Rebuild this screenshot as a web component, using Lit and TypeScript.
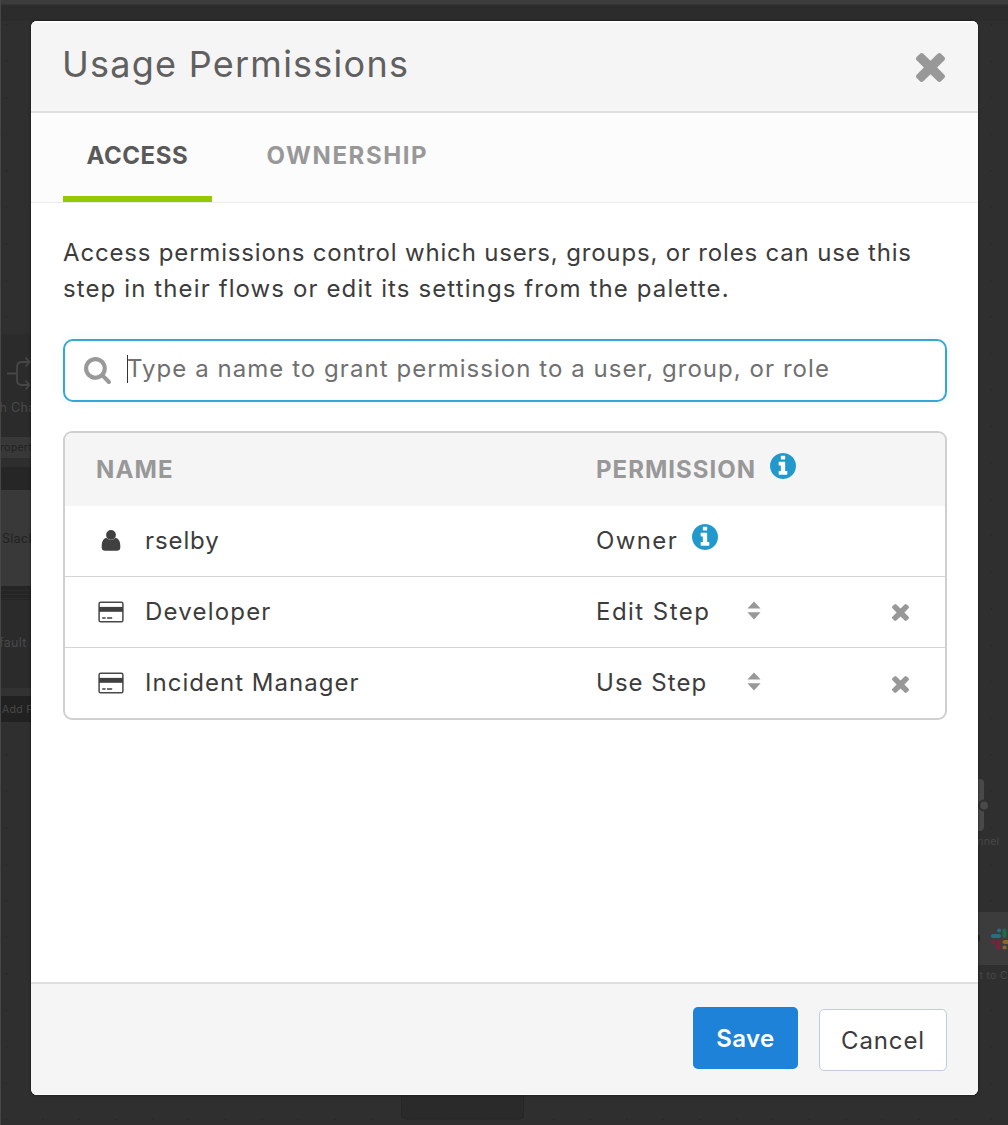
import { LitElement, html, css, svg, nothing } from "lit";
import { customElement, state } from "lit/decorators.js";

const TIMES = svg`<path d="M1490 1322q0 40-28 68l-136 136q-28 28-68 28t-68-28l-294-294-294 294q-28 28-68 28t-68-28l-136-136q-28-28-28-68t28-68l294-294-294-294q-28-28-28-68t28-68l136-136q28-28 68-28t68 28l294 294 294-294q28-28 68-28t68 28l136 136q28 28 28 68t-28 68l-294 294 294 294q28 28 28 68z"/>`;
const SEARCH = svg`<path d="M1216 832q0-185-131.5-316.5t-316.5-131.5-316.5 131.5-131.5 316.5 131.5 316.5 316.5 131.5 316.5-131.5 131.5-316.5zm512 832q0 52-38 90t-90 38q-54 0-90-38l-343-342q-179 124-399 124-143 0-273.5-55.5t-225-150-150-225-55.5-273.5 55.5-273.5 150-225 225-150 273.5-55.5 273.5 55.5 225 150 150 225 55.5 273.5q0 220-124 399l343 343q37 37 37 90z"/>`;
const INFO = svg`<path d="M1152 1376v-160q0-14-9-23t-23-9h-96v-512q0-14-9-23t-23-9h-320q-14 0-23 9t-9 23v160q0 14 9 23t23 9h96v320h-96q-14 0-23 9t-9 23v160q0 14 9 23t23 9h448q14 0 23-9t9-23zm-128-896v-160q0-14-9-23t-23-9h-192q-14 0-23 9t-9 23v160q0 14 9 23t23 9h192q14 0 23-9t9-23zm640 416q0 209-103 385.5t-279.5 279.5-385.5 103-385.5-103-279.5-279.5-103-385.5 103-385.5 279.5-279.5 385.5-103 385.5 103 279.5 279.5 103 385.5z"/>`;

const timesIcon = (cls: string) =>
  html`<svg class=${cls} viewBox="302 366 1188 1188">${TIMES}</svg>`;
const infoIcon = () =>
  html`<svg class="info" viewBox="128 128 1536 1536"><circle cx="896" cy="896" r="600" fill="#fff"/>${INFO}</svg>`;
const userIcon = () => html`
  <svg class="kind" viewBox="0 0 26 22">
    <path d="M8.300 7.800C5.200 8.800 3.700 11.400 3.700 15.600v1.800C3.700 19.600 5 20.700 7.200 20.700h11.600c2.200 0 3.500-1.100 3.500-3.300v-1.800c0-4.200-1.500-6.800-4.600-7.800a6.600 6.600 0 0 1-9.400 0z"/>
    <circle cx="13" cy="4.900" r="4.900"/>
  </svg>`;
const cardIcon = () => html`
  <svg class="kind" viewBox="0 0 26 22">
    <rect x="1.100" y="1.200" width="23.800" height="19.600" rx="1.600" fill="none" stroke="#484848" stroke-width="1.500"/>
    <rect x="1" y="5.900" width="24" height="4.900"/>
    <path d="M4.200 16.300h3.400v1.500H4.200zM9 16.300h5.200v1.500H9z"/>
  </svg>`;
const sortIcon = () => html`
  <svg class="sort" viewBox="0 0 14 19"><path d="M7 .5 13.600 7.500H.400zM.400 11.200h13.200L7 18.400z"/></svg>`;

interface Grant {
  kind: "user" | "role";
  name: string;
  nameCls: string;
  permission: string;
  permCls: string;
}

const GRANTS: Grant[] = [
  { kind: "user", name: "rselby", nameCls: "ls-10", permission: "Owner", permCls: "ls-15" },
  { kind: "role", name: "Developer", nameCls: "ls-13", permission: "Edit Step", permCls: "ls-16" },
  { kind: "role", name: "Incident Manager", nameCls: "ls-11", permission: "Use Step", permCls: "ls-11" },
];

@customElement("flow-canvas")
export class FlowCanvas extends LitElement {
  static styles = css`
    :host { display: block; position: absolute; inset: 0; overflow: hidden; background: #2f2f2f; font: 12.500px Inter, "Liberation Sans", sans-serif; letter-spacing: .3px; white-space: nowrap; }
    svg { display: block; width: 1008px; height: 1125px; }
    .dim { fill: #494949; }
    .ink { fill: #222; }
    .small { font-size: 10.500px; }
  `;
  render() {
    return html`
      <svg viewBox="0 0 1008 1125">
        <defs>
          <pattern id="dots" x="5.500" y="24" width="36.500" height="36.500" patternUnits="userSpaceOnUse">
            <rect width="1.500" height="1.500" fill="#262626"/>
          </pattern>
        </defs>
        <rect y="5" width="1008" height="16" fill="#2c2c2c"/>
        <rect width="1008" height="1125" fill="url(#dots)"/>
        <rect width="1008" height="4.500" fill="#3c3c3c"/>

        <rect y="334" width="40" height="388" fill="#2b2b2b"/>
        <path d="M7 373.500h9M30 362h-8q-5 0-5 5v13q0 5 5 5h8M25.500 357.500l4 4.500-4 4.500M25.500 380.500l4 4.500-4 4.500" fill="none" stroke="#474747" stroke-width="1.800"/>
        <text class="dim" x="-.5" y="412">h Change</text>
        <rect y="437" width="40" height="21" fill="#383838"/>
        <text class="ink small" x="0" y="451">roperty</text>
        <rect y="458" width="40" height="9" fill="#2e2e2e"/>
        <rect y="467" width="40" height="23" fill="#262626"/>
        <rect y="490" width="40" height="96" fill="#393939"/>
        <text class="ink" x="2" y="542.500">Slack</text>
        <rect y="586" width="40" height="14" fill="#252525"/>
        <path d="M0 590.500h40M0 594.500h40M0 598.500h40" stroke="#2c2c2c" stroke-width="1"/>
        <text class="dim" x="-1" y="647">fault F</text>
        <rect y="688" width="40" height="8" fill="#323232"/>
        <rect y="696" width="40" height="26" fill="#212121"/>
        <text class="dim small" x="2" y="713">Add Pro</text>

        <path d="M975 779h5q4 0 4 4v43q0 5-4 5h-5z" fill="#494949"/>
        <circle cx="984" cy="805.500" r="5" fill="#494949" stroke="#2f2f2f" stroke-width="2"/>
        <text class="dim small" x="971" y="845">annel</text>
        <rect x="970" y="912" width="38" height="53" fill="#3c3c3c"/>
        <circle cx="975" cy="938" r="5" fill="#222"/>
        <g stroke-width="4.200" stroke-linecap="round" fill="none">
          <path d="M993 936h6M999 930.500h.1" stroke="#276d84"/>
          <path d="M1004.500 930.500v5.500M1010 936h.1" stroke="#20694c"/>
          <path d="M998.500 942v6M993 942h.1" stroke="#7d1f41"/>
          <path d="M1004.500 942h6M1004.500 947.500h.1" stroke="#87682a"/>
        </g>
        <text class="dim small" x="979.500" y="979">t to C</text>
        <path d="M401.500 1090v25q0 4 4 4h114q4 0 4-4v-25z" fill="#2a2a2a" stroke="#262626"/>
        <rect width="1" height="1125" fill="#464646"/>
      </svg>`;
  }
}

@customElement("app-root")
export class AppRoot extends LitElement {
  static styles = css`
    :host {
      display: flex; position: relative; box-sizing: border-box; width: 1008px; height: 1125px;
      padding: 21px 30px 30px 31px; overflow: hidden;
      font: 24px/36px Inter, "Liberation Sans", sans-serif; color: #3c3c3c;
    }
    * { box-sizing: border-box; }
    svg { display: block; flex: none; }
    button { font: inherit; padding: 0; border: 0; background: none; color: inherit; cursor: pointer; }
    .modal {
      position: relative; flex: 1; display: flex; flex-direction: column; background: #fff;
      border-radius: 6px; overflow: hidden; box-shadow: 0 0 3px rgba(0, 0, 0, .6);
    }
    .head {
      height: 92px; flex: none; display: flex; justify-content: space-between; align-items: flex-start;
      padding: 18px 33px 0 31px; background: #f5f5f5; border-top: 2px solid #fdfdfd; border-bottom: 2px solid #dfdfdf;
    }
    .title { margin: 0; font-size: 36px; line-height: 46px; font-weight: 400; color: #606060; letter-spacing: 1.250px; }
    .close { margin-top: 12px; }
    .close-x { width: 29px; height: 29px; fill: #989898; }
    .tabs { height: 90px; flex: none; display: flex; padding-left: 31.500px; background: #fcfcfc; border-bottom: 1.500px solid #ececec; }
    .tab { height: 89px; padding: 6px 24px 4px; font-weight: 700; line-height: 36px; color: #989898; border-bottom: 6px solid transparent; }
    .tab.on { width: 149px; padding-right: 0; text-align: left; color: #595959; border-color: #94c900; letter-spacing: .550px; }
    .tab.off { margin-left: 31px; letter-spacing: 1.600px; }
    .body { flex: 1; padding: 32px 31px 0 32px; }
    .intro { margin: 0; height: 72px; line-height: 36px; white-space: nowrap; }
    .line { display: block; letter-spacing: .820px; }
    .line.second { letter-spacing: 1.110px; }
    .search {
      display: flex; align-items: center; height: 63px; margin-top: 32px; padding: 0 18.500px;
      border: 2px solid #35a7d6; border-radius: 10px; box-shadow: 0 0 10px rgba(53, 167, 214, .1);
    }
    .glass { width: 27px; height: 27px; fill: #999; }
    .caret { width: 1.500px; height: 28px; margin: -3px 0 0 16px; background: #333; }
    .hint { color: #707070; letter-spacing: 1.050px; white-space: nowrap; margin: -4px 0 0 -1px; }
    .table { margin-top: 29px; border: 2px solid #cfcfcf; border-radius: 9px; overflow: hidden; }
    .row { display: grid; grid-template-columns: 500px 166px 1fr; align-items: center; height: 71.500px; padding: 0 36px 0 31px; border-top: 1.500px solid #d4d4d4; }
    .row.top { height: 72.500px; padding-top: 2px; background: #f5f5f5; border: 0; font-weight: 700; color: #989898; }
    .row.first { height: 70px; border: 0; padding-top: 1px; }
    .row.last { height: 71px; }
    .cell { display: flex; align-items: center; white-space: nowrap; }
    .col-name { letter-spacing: 1.150px; }
    .col-perm { letter-spacing: 1px; }
    .kind { width: 26px; height: 22px; margin: 0 21px 0 2px; fill: #404040; }
    .info { width: 26px; height: 26px; margin: -9px 0 0 14px; fill: #2199cd; }
    .sort { width: 14px; height: 19px; fill: #989898; }
    .drop { margin: -3px 1px 0 auto; }
    .remove { justify-self: end; margin-top: 2px; }
    .remove-x { width: 17px; height: 17px; fill: #989898; }
    .perm { display: flex; align-items: center; width: 166px; }
    .ls-10 { letter-spacing: .900px; }
    .ls-11 { letter-spacing: 1.020px; }
    .ls-13 { letter-spacing: 1.200px; }
    .ls-15 { letter-spacing: 1.400px; }
    .ls-16 { letter-spacing: 1.450px; }
    .foot {
      height: 113px; flex: none; display: flex; justify-content: flex-end; align-items: flex-start; gap: 21px;
      padding: 23px 31px 0; background: #f5f5f5; border-top: 2px solid #dfdfdf; border-bottom: 1px solid #fff;
    }
    .save { width: 105px; height: 62px; border-radius: 5px; background: #1e82d9; color: #fff; font-weight: 600; letter-spacing: .400px; padding-top: 1px; }
    .cancel { width: 128px; height: 62px; margin-top: 2px; padding-top: 1px; border: 1.500px solid #c0cbe0; border-radius: 5px; background: #fff; letter-spacing: .850px; }
  `;

  @state() private grants = GRANTS;

  private row(g: Grant, i: number) {
    const edge = i === 0 ? "first" : i === this.grants.length - 1 ? "last" : "";
    return html`
      <div class="row ${edge}">
        <div class="cell">${g.kind === "user" ? userIcon() : cardIcon()}<span class=${g.nameCls}>${g.name}</span></div>
        <div class="perm">
          <span class=${g.permCls}>${g.permission}</span>
          ${g.kind === "user" ? infoIcon() : html`<button class="drop">${sortIcon()}</button>`}
        </div>
        ${g.kind === "user" ? nothing : html`<button class="remove">${timesIcon("remove-x")}</button>`}
      </div>`;
  }

  render() {
    return html`
      <flow-canvas></flow-canvas>
      <section class="modal">
        <header class="head">
          <h1 class="title">Usage Permissions</h1>
          <button class="close">${timesIcon("close-x")}</button>
        </header>
        <nav class="tabs">
          <button class="tab on">ACCESS</button>
          <button class="tab off">OWNERSHIP</button>
        </nav>
        <main class="body">
          <p class="intro">
            <span class="line">Access permissions control which users, groups, or roles can use this</span>
            <span class="line second">step in their flows or edit its settings from the palette.</span>
          </p>
          <div class="search">
            <svg class="glass" viewBox="64 128 1664 1664">${SEARCH}</svg>
            <span class="caret"></span>
            <span class="hint">Type a name to grant permission to a user, group, or role</span>
          </div>
          <div class="table">
            <div class="row top">
              <div class="cell col-name">NAME</div>
              <div class="cell col-perm">PERMISSION${infoIcon()}</div>
            </div>
            ${this.grants.map((g, i) => this.row(g, i))}
          </div>
        </main>
        <footer class="foot">
          <button class="save">Save</button>
          <button class="cancel">Cancel</button>
        </footer>
      </section>`;
  }
}
